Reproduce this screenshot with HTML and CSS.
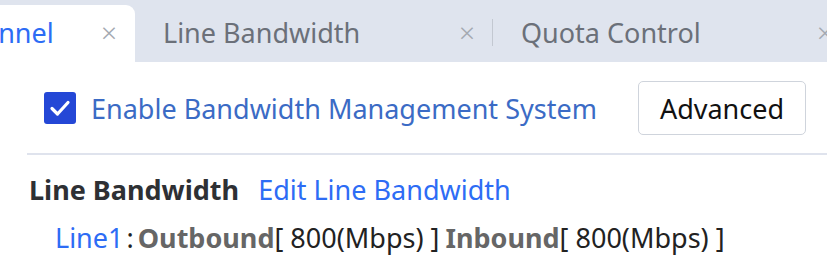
FILE: index.html
```html
<!DOCTYPE html>
<html lang="en">
<head>
  <meta charset="UTF-8" />
  <meta name="viewport" content="width=device-width, initial-scale=1" />
  <title>Bandwidth Management</title>
  <link rel="stylesheet" href="styles.css">
</head>
<body>

  <div class="tabs">
    <div class="tab active">
      <span class="tab-title">Bandwidth Channel</span>
      <span class="tab-close">&times;</span>
    </div>
    <div class="tab split">
      <span class="tab-title">Line Bandwidth</span>
      <span class="tab-close">&times;</span>
    </div>
    <div class="tab">
      <span class="tab-title">Quota Control</span>
      <span class="tab-close">&times;</span>
    </div>
  </div>

  <div class="panel">
    <div class="enable-row">
      <label class="enable">
        <span class="checkbox">
          <svg viewBox="0 0 32 32" width="32" height="32">
            <path d="M8 16.5 L13.5 22 L24 10.5" fill="none" stroke="#fff" stroke-width="3.2" stroke-linecap="round" stroke-linejoin="round"/>
          </svg>
        </span>
        Enable Bandwidth Management System
      </label>
      <button class="btn">Advanced</button>
    </div>

    <div class="section">
      <div class="section-head">
        <span class="section-title">Line Bandwidth</span>
        <a class="link" href="#">Edit Line Bandwidth</a>
      </div>
      <div class="line-row">
        <a class="link" href="#">Line1</a><span class="colon">:</span><b class="dir">Outbound</b>[ 800(Mbps) ]<b class="dir next">Inbound</b>[ 800(Mbps) ]
      </div>
    </div>
  </div>

</body>
</html>
```

FILE: styles.css
```css
body {
  margin: 0;
  background: #fff;
  font-family: 'Noto Sans', 'Open Sans', sans-serif;
  font-size: 27px;
  color: #222;
  overflow: hidden;
}

.tabs {
  display: flex;
  height: 62px;
  padding-top: 5px;
  box-sizing: border-box;
  background: #dfe4ee;
  margin-left: -223px;
  width: 1100px;
}

.tab {
  position: relative;
  flex: 0 0 358px;
  display: flex;
  align-items: center;
  justify-content: space-between;
  padding: 0 18px 0 28px;
  box-sizing: border-box;
  color: #6b7079;
}

.tab.active {
  background: #fff;
  color: #2d6cf5;
  border-top-right-radius: 9px;
}

.tab.split::after {
  content: "";
  position: absolute;
  right: 0;
  top: 14px;
  height: 27px;
  width: 1px;
  background: #c3c8d1;
}

.tab-title {
  margin-top: -2px;
}

.tab-close {
  color: #a4a9b1;
  font-size: 28px;
  font-weight: 300;
  margin-top: -4px;
}

.panel {
  padding-left: 27px;
}

.enable-row {
  display: flex;
  align-items: center;
  justify-content: space-between;
  margin-top: 19px;
  padding: 0 21px 18px 17px;
  border-bottom: 2px solid #dfe3ed;
}

.enable {
  display: flex;
  align-items: center;
  gap: 15px;
  color: #3b6bc5;
}

.checkbox {
  display: block;
  width: 32px;
  height: 32px;
  background: #2447d6;
  border-radius: 3px;
}

.checkbox svg {
  display: block;
}

.btn {
  height: 54px;
  width: 168px;
  font-family: inherit;
  font-size: 27px;
  color: #111;
  background: #fff;
  border: 1.5px solid #cfd4dc;
  border-radius: 5px;
}

.section {
  padding: 16px 0 0 2px;
}

.section-head {
  display: flex;
  gap: 19px;
  line-height: 38px;
}

.section-title {
  font-weight: bold;
  color: #2e3034;
}

.link {
  color: #2d6cf5;
  text-decoration: none;
}

.line-row {
  margin-top: 10px;
  padding-left: 26px;
  line-height: 38px;
}

.colon {
  margin: 0 4px 0 3px;
}

.dir {
  color: #666;
}

.dir.next {
  margin-left: 6px;
}
```
